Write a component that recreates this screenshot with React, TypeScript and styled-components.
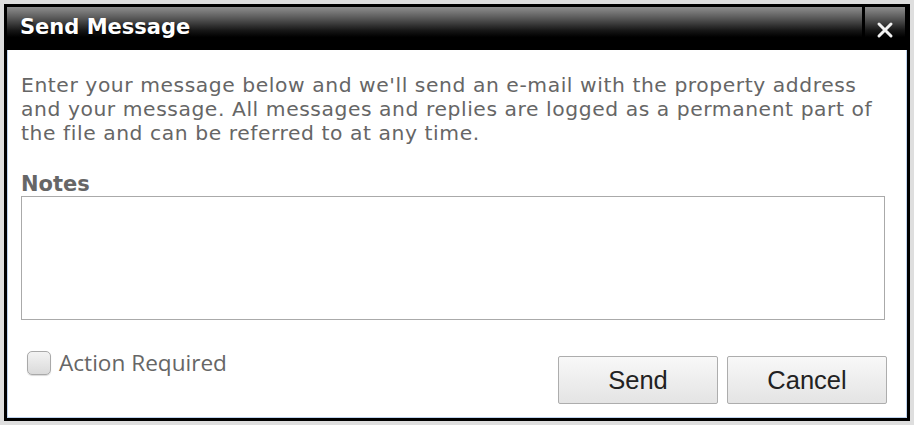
import React from "react";
import styled, { createGlobalStyle } from "styled-components";

const Global = createGlobalStyle`
  html, body { margin: 0; padding: 0; background: #dedede; }
  body { width: 914px; height: 425px; overflow: hidden; }
  * { box-sizing: border-box; }
`;

const Dialog = styled.div`
  margin: 4px;
  width: 906px;
  height: 417px;
  border: 3px solid #000;
  background: #000;
  display: flex;
  flex-direction: column;
`;

const Header = styled.div`
  height: 43px;
  display: flex;
  gap: 3px;
  padding-right: 2px;
  background: #000;
`;

const barGradient = `linear-gradient(180deg, #8e8e8e 0%, #5a5a5a 25%, #161616 55%, #000 70%, #000 100%)`;

const Title = styled.div`
  flex: 1;
  background: ${barGradient};
  color: #fff;
  font-family: "DejaVu Sans", Verdana, sans-serif;
  font-weight: bold;
  font-size: 21px;
  line-height: 24px;
  padding: 8px 0 0 13px;
  text-shadow: 0 2px 2px rgba(0, 0, 0, 0.8);
`;

const Close = styled.button`
  width: 40px;
  border: 0;
  padding: 0;
  background: ${barGradient};
  display: flex;
  align-items: center;
  justify-content: center;
  padding-top: 2px;
  cursor: pointer;
`;

const Body = styled.div`
  flex: 1;
  background: #fff;
  border: 1px solid #bfd3ee;
  border-top: 0;
  padding: 23px 19px 13px 13px;
  display: flex;
  flex-direction: column;
  font-family: "DejaVu Sans", Verdana, sans-serif;
  color: #666;
`;

const Intro = styled.p`
  margin: 0;
  font-size: 20.3px;
  line-height: 24px;
  letter-spacing: 0.57px;
  white-space: nowrap;
`;

const Label = styled.div`
  margin-top: 27px;
  font-weight: bold;
  font-size: 21px;
  line-height: 24px;
`;

const Notes = styled.textarea`
  width: 864px;
  height: 124px;
  border: 1px solid #aaa;
  resize: none;
  outline: none;
  margin: 0;
  display: block;
`;

const Footer = styled.div`
  margin-top: 33px;
  display: flex;
  justify-content: space-between;
  align-items: flex-start;
`;

const CheckLabel = styled.label`
  display: flex;
  align-items: center;
  gap: 8px;
  margin-left: 6px;
  margin-top: -2px;
  font-family: "Open Sans", sans-serif;
  font-size: 22.6px;
  line-height: 24px;
  color: #666;
`;

const Box = styled.span`
  width: 24px;
  height: 24px;
  border: 1px solid #a9a9a9;
  border-radius: 5px;
  background: linear-gradient(180deg, #f3f3f3 0%, #dadada 100%);
  box-shadow: 0 1px 1px rgba(0, 0, 0, 0.15);
`;

const Buttons = styled.div`
  display: flex;
  gap: 9px;
  margin-top: 3px;
`;

const Button = styled.button`
  width: 160px;
  height: 48px;
  border: 1px solid #adadad;
  border-radius: 2px;
  background: linear-gradient(180deg, #f8f8f8 0%, #e4e4e4 100%);
  font-family: "Liberation Sans", Arial, sans-serif;
  font-size: 25.5px;
  color: #222;
  padding: 0;
  cursor: pointer;
`;

export default function App() {
  return (
    <>
      <Global />
      <Dialog>
        <Header>
          <Title>Send Message</Title>
          <Close aria-label="Close">
            <svg width="18" height="18" viewBox="0 0 18 18">
              <path d="M3 3 L15 15 M15 3 L3 15" stroke="#f2f2f2" strokeWidth="3" strokeLinecap="round" />
            </svg>
          </Close>
        </Header>
        <Body>
          <Intro>
            Enter your message below and we'll send an e-mail with the property address
            <br />
            and your message. All messages and replies are logged as a permanent part of
            <br />
            the file and can be referred to at any time.
          </Intro>
          <Label>Notes</Label>
          <Notes />
          <Footer>
            <CheckLabel>
              <Box />
              Action Required
            </CheckLabel>
            <Buttons>
              <Button>Send</Button>
              <Button>Cancel</Button>
            </Buttons>
          </Footer>
        </Body>
      </Dialog>
    </>
  );
}
